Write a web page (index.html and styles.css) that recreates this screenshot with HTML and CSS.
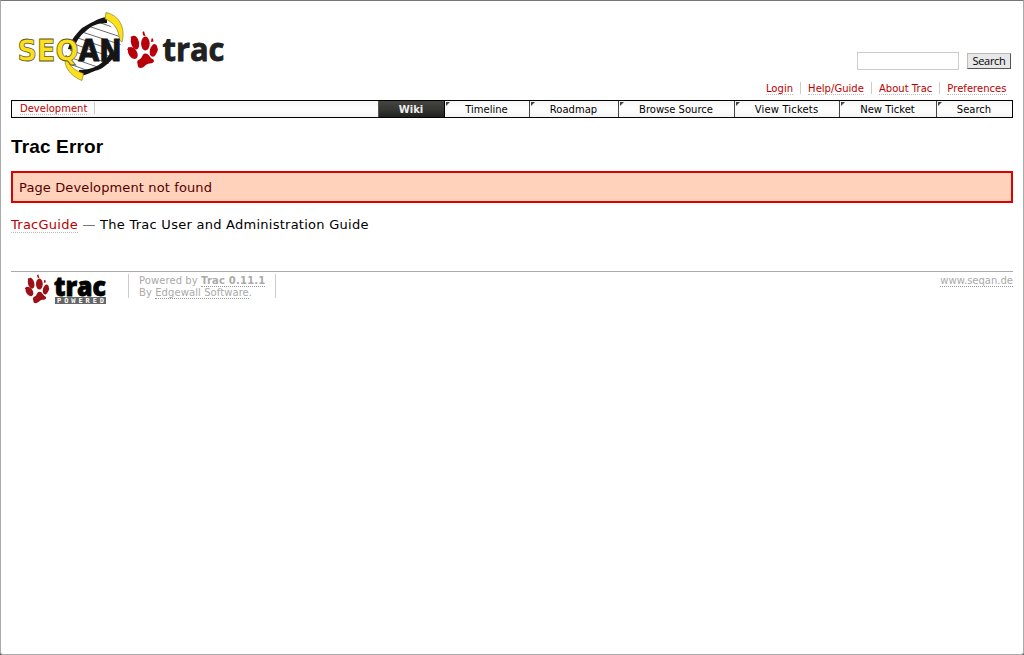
FILE: index.html
```html
<!DOCTYPE html>
<html lang="en">
<head>
<meta charset="utf-8">
<title>Trac Error</title>
<link rel="stylesheet" href="styles.css">
</head>
<body>
<div class="window">
  <header class="banner">
    <svg class="logo" width="214" height="74" viewBox="14 9 214 74">
      <defs>
        <clipPath id="helix-clip"><path d="M68 70C66 44 80 26 106 20L121 39C121 58 105 71 79 75Z"/></clipPath>
        <g id="paw">
          <ellipse cx="132.800" cy="53" rx="4.200" ry="6.500" transform="rotate(-32 132.8 53)"/>
          <ellipse cx="135" cy="42.600" rx="4" ry="7" transform="rotate(-14 135 42.6)"/>
          <ellipse cx="145.400" cy="43.600" rx="4.300" ry="7"/>
          <ellipse cx="153.600" cy="50.400" rx="3.700" ry="6.400" transform="rotate(14 153.6 50.4)"/>
          <path d="M127 50l1.500-3 1.500.500 1 2.500zM130.500 37l2-1 1 3-2 0zM142.500 32l1.500-.700 1.500 5-2.500-1zM151 42l.500-3.500 1.500 0 .500 3zM155.500 49l2.500-.500-1 4z"/>
          <path d="M145.500 53.500C149.500 53.500 149.500 58 152.500 59C155.500 60.500 153.500 63.500 150 63.500C146 63 145 67.500 140.500 68C137.500 68 138 65 137.300 63C136.500 60 140 60 141.500 57.500C142.500 56 143 53.500 145.500 53.500Z"/>
        </g>
      </defs>
      <g clip-path="url(#helix-clip)" class="rungs">
        <path d="M88 26L124 38M82 32L122 45M78 38L118 52M74 44L114 58M70 50L110 64M66 56L106 70M64 62L100 75M92 20L124 31"/>
      </g>
      <path class="strand-black" d="M68 49C70 41 76 34 82 28C89 24 98 18 107 17L107 23C97 23 91 26 86 31C80 35 76 42 73 50Z"/>
      <path class="strand-black" d="M79 70C95 70 104 63 111 52L119 52C111 61 103 69 98 70C90 72 88 75 79 76Z"/>
      <path class="strand-yellow" d="M106 12.500C119 15 126 28 122 42L119.500 40C119 30 114 22 105 19Z"/>
      <path class="strand-yellow" d="M67 56C68 66 74 70 83.500 73.500L82 80.500C70 76 62 65 66 55Z"/>
      <text class="seq" x="17.500" y="61" textLength="61" lengthAdjust="spacingAndGlyphs">SEQ</text>
      <text class="an" x="78.500" y="61" textLength="43" lengthAdjust="spacingAndGlyphs">AN</text>
      <use href="#paw" class="paw"/>
      <text class="trac-word" x="162.500" y="61" textLength="62" lengthAdjust="spacingAndGlyphs">trac</text>
    </svg>
    <div class="tools">
      <form class="search"><input type="text" class="query" aria-label="Search"><button type="button" class="go">Search</button></form>
      <ul class="metanav">
        <li><a>Login</a></li><li><a>Help/Guide</a></li><li><a>About Trac</a></li><li><a>Preferences</a></li>
      </ul>
    </div>
  </header>
  <nav class="mainnav">
    <div class="crumb"><a>Development</a></div>
    <div class="tab active">Wiki</div>
    <div class="tab timeline">Timeline</div>
    <div class="tab roadmap">Roadmap</div>
    <div class="tab browse">Browse Source</div>
    <div class="tab tickets">View Tickets</div>
    <div class="tab new">New Ticket</div>
    <div class="tab find">Search</div>
  </nav>
  <main>
    <h1>Trac Error</h1>
    <div class="message">Page Development not found</div>
    <p class="guide"><a>TracGuide</a> <span class="dash">—</span> The Trac User and Administration Guide</p>
  </main>
  <footer>
    <svg class="powered-logo" width="107" height="31" viewBox="11 273 107 31">
      <use href="#paw" class="paw small" transform="translate(-75.500 248.600) scale(.79)"/>
      <text class="trac-word" x="54" y="295" textLength="52" lengthAdjust="spacingAndGlyphs">trac</text>
      <rect class="plate" x="55" y="296" width="51" height="7"/>
      <text class="powered-word" x="57" y="302" textLength="47">POWERED</text>
    </svg>
    <p class="credits">Powered by <a class="version">Trac 0.11.1</a><br>By <a>Edgewall Software</a>.</p>
    <p class="site"><a>www.seqan.de</a></p>
  </footer>
</div>
</body>
</html>
```
FILE: styles.css
```css
* { box-sizing: border-box; }
body { margin: 0; background: #555; font-family: Verdana, "DejaVu Sans", sans-serif; color: #000; }
.window {
  height: 655px;
  padding: 8px 10px 0;
  overflow: hidden;
  background: #fff;
  border: 1px solid #aaa;
  border-top-color: #777;
  border-radius: 0 0 3px 3px;
}
a { color: #b00; border-bottom: 1px dotted #bbb; }
ul, p { margin: 0; padding: 0; list-style: none; }

.banner { display: flex; justify-content: space-between; height: 91px; }
.logo { margin-left: 3px; }
.rungs { fill: none; stroke: #444; stroke-width: .8; }
.strand-black { fill: #151515; }
.strand-yellow { fill: #fde01c; stroke: #77701c; stroke-width: .6; }
.seq, .an { font: bold 30px "DejaVu Sans", sans-serif; }
.seq { fill: #fde01c; stroke: #5c5628; stroke-width: .8; }
.an { fill: #151515; stroke: #151515; stroke-width: 1; }
.paw { fill: #b8000b; }
.small { fill: #9c1017; }
.trac-word { font: bold 32px "Open Sans", sans-serif; fill: #202020; stroke: #202020; stroke-width: .8; }

.tools { display: flex; flex-direction: column; align-items: flex-end; padding: 43px 0 0; margin-right: 2px; }
.search { display: flex; gap: 8px; height: 18px; margin: 0; }
.query { width: 102px; height: 18px; padding: 0; border: 1px solid #ccc; background: #fff; }
.go {
  width: 44px; height: 16px; margin-top: 1px; padding: 0;
  background: #e8e8e8; border: 1px solid #bbb; border-right-color: #555; border-bottom-color: #555;
  font: 11px/14px "Open Sans", sans-serif; letter-spacing: -.3px; color: #000;
}
.metanav { display: flex; margin: 12px -2px 0 0; font-size: 10px; line-height: 14px; }
.metanav li { height: 12px; padding: 0 7px; border-left: 1px solid #ccc; }
.metanav li:first-child { border-left: 0; }
.metanav li:last-child { padding-right: 6.5px; }
.metanav a { letter-spacing: .03px; }

.mainnav {
  display: flex; width: 1002px; height: 18px;
  border: 1px solid #000; background: linear-gradient(#f4f4f4, #fff 45%, #f3f3f3);
  font-size: 10px; line-height: 17px;
}
.crumb { flex: 1; padding-left: 8px; line-height: 15px; }
.crumb a { display: inline-block; height: 14px; position: relative; }
.crumb a::after { content: ""; position: absolute; left: 74px; top: 1px; height: 12px; border-left: 1px solid #ccc; }
.tab { position: relative; padding-right: 1px; text-align: center; border-left: 1px solid #444; }
.tab::before { content: ""; position: absolute; left: 1px; top: 1px; border-top: 4px solid #444; border-right: 4px solid transparent; }
.active { width: 66px; color: #eee; font-weight: bold; background: linear-gradient(#454540, #343632 55%, #20221f); border-color: #555; }
.active::before { display: none; }
.timeline { width: 85px; border-left-color: #000; }
.roadmap { width: 89px; }
.browse { width: 116px; }
.tickets { width: 105px; letter-spacing: .15px; }
.new { width: 97px; }
.find { width: 76px; }

h1 { margin: 18px 0 0; font: bold 19px/22px Arial, "Liberation Sans", sans-serif; letter-spacing: .15px; }
.message {
  width: 1002px; height: 32px; margin-top: 13px; padding-left: 6px;
  border: 2px solid #d00; background: #ffd2bc; color: #500;
  font-size: 13px; line-height: 30px; letter-spacing: .12px;
}
.guide { margin-top: 14px; font-size: 13px; line-height: 16px; letter-spacing: .26px; }
.dash { color: #777; }

footer { display: flex; width: 1002px; height: 34px; margin-top: 38px; padding-top: 2px; border-top: 1px solid #aaa; color: #aaa; font-size: 10px; line-height: 12px; }
footer a { color: #aaa; border-color: #999; }
.powered-logo { overflow: visible; }
.powered-logo .trac-word { font-size: 26px; font-weight: 800; fill: #000; stroke: #000; }
.plate { fill: #666; }
.powered-word { fill: #fff; font: bold 7px "DejaVu Sans Mono", monospace; }
.credits { width: 148px; height: 24px; margin-left: 10px; padding: 1px 0 0 10px; border: 1px solid #ccc; border-width: 0 1px; white-space: nowrap; letter-spacing: .08px; }
.version { font-weight: bold; letter-spacing: .2px; }
.site { margin-left: auto; padding-top: 1px; }
```
